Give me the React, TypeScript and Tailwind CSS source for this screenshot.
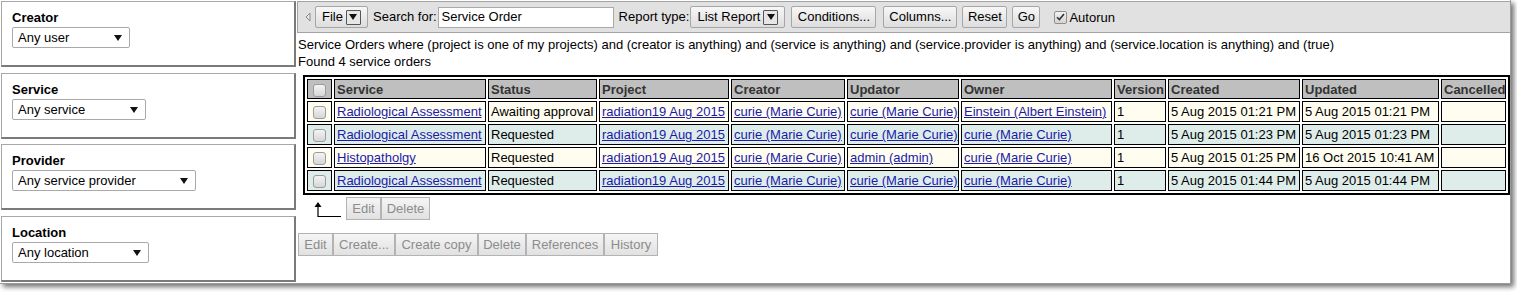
import React from "react";

const FONT = "font-['Liberation_Sans',Arial,sans-serif]";

function Arrow({ className = "" }: { className?: string }) {
  return (
    <svg className={className} width="8" height="6" viewBox="0 0 8 6">
      <polygon points="0,0 8,0 4,6" fill="#111" />
    </svg>
  );
}

function FilterPanel({
  label,
  value,
  width,
  className = "",
}: {
  label: string;
  value: string;
  width: string;
  className?: string;
}) {
  return (
    <div
      className={`h-[66px] bg-white border border-[#a8a8a8] border-r-2 border-b-2 border-r-[#7a7a7a] border-b-[#7a7a7a] pl-[10px] pt-[7px] ${className}`}
    >
      <div className="font-bold leading-[17px]">{label}</div>
      <div
        className={`${width} h-[21px] mt-[1px] flex items-center justify-between pl-[5px] pr-[7px] border border-[#a9a9a9] rounded-[2px] bg-white leading-[15px]`}
      >
        <span>{value}</span>
        <Arrow />
      </div>
    </div>
  );
}

function ToolButton({
  children,
  width,
  className = "",
}: {
  children: React.ReactNode;
  width: string;
  className?: string;
}) {
  return (
    <div
      className={`${width} h-[22px] flex items-center justify-center gap-[3px] border border-[#a6a6a6] rounded-[2px] bg-linear-to-b from-[#f7f7f7] to-[#dddddd] text-black ${className}`}
    >
      {children}
    </div>
  );
}

function DropBox() {
  return (
    <span className="w-[15px] h-[15px] flex items-center justify-center border border-[#555] bg-[#e6e6e6] rounded-[1px]">
      <Arrow />
    </span>
  );
}

function DisabledButton({ label, width }: { label: string; width: string }) {
  return (
    <div
      className={`${width} h-[23px] flex items-center justify-center border border-[#b3b3b3] bg-linear-to-b from-[#f5f5f5] to-[#e1e1e1] text-[#8c8c8c]`}
    >
      {label}
    </div>
  );
}

function Check() {
  return (
    <span className="inline-block w-[13px] h-[13px] border border-[#9c9c9c] rounded-[3px] bg-linear-to-b from-[#f4f4f4] to-[#d6d6d6] align-middle" />
  );
}

const columns = [
  { name: "Service", w: "w-[152px]" },
  { name: "Status", w: "w-[109px]" },
  { name: "Project", w: "w-[130px]" },
  { name: "Creator", w: "w-[114px]" },
  { name: "Updator", w: "w-[112px]" },
  { name: "Owner", w: "w-[151px]" },
  { name: "Version", w: "w-[52px]" },
  { name: "Created", w: "w-[132px]" },
  { name: "Updated", w: "w-[137px]" },
  { name: "Cancelled", w: "w-[65px]" },
];

type Row = {
  service: string;
  status: string;
  updator: string;
  owner: string;
  created: string;
  updated: string;
};

const rows: Row[] = [
  {
    service: "Radiological Assessment",
    status: "Awaiting approval",
    updator: "curie (Marie Curie)",
    owner: "Einstein (Albert Einstein)",
    created: "5 Aug 2015 01:21 PM",
    updated: "5 Aug 2015 01:21 PM",
  },
  {
    service: "Radiological Assessment",
    status: "Requested",
    updator: "curie (Marie Curie)",
    owner: "curie (Marie Curie)",
    created: "5 Aug 2015 01:23 PM",
    updated: "5 Aug 2015 01:23 PM",
  },
  {
    service: "Histopatholgy",
    status: "Requested",
    updator: "admin (admin)",
    owner: "curie (Marie Curie)",
    created: "5 Aug 2015 01:25 PM",
    updated: "16 Oct 2015 10:41 AM",
  },
  {
    service: "Radiological Assessment",
    status: "Requested",
    updator: "curie (Marie Curie)",
    owner: "curie (Marie Curie)",
    created: "5 Aug 2015 01:44 PM",
    updated: "5 Aug 2015 01:44 PM",
  },
];

const td = "border border-black px-[2px] h-[21px] whitespace-nowrap overflow-hidden";
const link = "text-[#1a1aab] underline";

export default function App() {
  return (
    <div className={`w-[1517px] h-[292px] bg-white text-black text-[13px] ${FONT}`}>
      <div className="w-[1511px] h-[284px] flex bg-white border-r border-b border-[#9a9a9a] shadow-[3px_3px_5px_rgba(0,0,0,0.55)]">
        {/* filters */}
        <div className="w-[297px] flex flex-col pl-[1px] pr-[1px] pt-[1px]">
          <FilterPanel label="Creator" value="Any user" width="w-[118px]" />
          <FilterPanel label="Service" value="Any service" width="w-[134px]" className="mt-[6px]" />
          <FilterPanel label="Provider" value="Any service provider" width="w-[184px]" className="mt-[5px]" />
          <FilterPanel label="Location" value="Any location" width="w-[137px]" className="mt-[6px]" />
        </div>

        {/* main */}
        <div className="flex-1 flex flex-col pt-[1px]">
          <div className="h-[32px] flex items-center bg-[#e1e1e1] border-t border-l border-b border-[#a3a3a3] pl-[7px]">
            <svg width="6" height="10" viewBox="0 0 6 10">
              <polygon points="5,1 1,5 5,9" fill="#e8e8e8" stroke="#8a8a8a" strokeWidth="1" />
            </svg>
            <ToolButton width="w-[53px]" className="ml-[4px]">
              <span>File</span>
              <DropBox />
            </ToolButton>
            <span className="ml-[5px]">Search for:</span>
            <div className="ml-[1px] w-[176px] h-[21px] flex items-center px-[3px] bg-white border border-[#a9a9a9]">
              Service Order
            </div>
            <span className="ml-[5px]">Report type:</span>
            <ToolButton width="w-[95px]" className="ml-[1px]">
              <span>List Report</span>
              <DropBox />
            </ToolButton>
            <ToolButton width="w-[85px]" className="ml-[6px]">
              Conditions...
            </ToolButton>
            <ToolButton width="w-[74px]" className="ml-[7px]">
              Columns...
            </ToolButton>
            <ToolButton width="w-[45px]" className="ml-[5px]">
              Reset
            </ToolButton>
            <ToolButton width="w-[28px]" className="ml-[5px]">
              Go
            </ToolButton>
            <span className="ml-[14px] w-[13px] h-[13px] border border-[#8f8f8f] rounded-[2px] bg-linear-to-b from-[#f2f2f2] to-[#d4d4d4] flex items-center justify-center">
              <svg width="9" height="8" viewBox="0 0 9 8">
                <path d="M1 4.2 L3.4 6.6 L8 1" fill="none" stroke="#333" strokeWidth="1.6" />
              </svg>
            </span>
            <span className="ml-[2px] mt-[2px]">Autorun</span>
          </div>

          <div className="pl-[1px] mt-[3px] leading-[17px]">
            <div>
              Service Orders where (project is one of my projects) and (creator is anything) and (service is
              anything) and (service.provider is anything) and (service.location is anything) and (true)
            </div>
            <div>Found 4 service orders</div>
          </div>

          <table className="ml-[6px] mt-[5px] w-[1207px] table-fixed border-separate border-spacing-[2px] border-2 border-black leading-[15px]">
            <thead>
              <tr>
                <th className="w-[25px] border border-black bg-[#bfbfbf] h-[20px] text-center">
                  <Check />
                </th>
                {columns.map((c) => (
                  <th
                    key={c.name}
                    className={`${c.w} border border-black bg-[#bfbfbf] h-[20px] px-[2px] text-left font-bold text-[#333] whitespace-nowrap overflow-hidden`}
                  >
                    {c.name}
                  </th>
                ))}
              </tr>
            </thead>
            <tbody>
              {rows.map((r, i) => {
                const bg = i % 2 === 0 ? "bg-[#fffdef]" : "bg-[#deedea]";
                return (
                  <tr key={i}>
                    <td className={`${td} ${bg} text-center`}>
                      <Check />
                    </td>
                    <td className={`${td} ${bg}`}>
                      <span className={link}>{r.service}</span>
                    </td>
                    <td className={`${td} ${bg}`}>{r.status}</td>
                    <td className={`${td} ${bg}`}>
                      <span className={link}>radiation19 Aug 2015</span>
                    </td>
                    <td className={`${td} ${bg}`}>
                      <span className={link}>curie (Marie Curie)</span>
                    </td>
                    <td className={`${td} ${bg}`}>
                      <span className={link}>{r.updator}</span>
                    </td>
                    <td className={`${td} ${bg}`}>
                      <span className={link}>{r.owner}</span>
                    </td>
                    <td className={`${td} ${bg}`}>1</td>
                    <td className={`${td} ${bg}`}>{r.created}</td>
                    <td className={`${td} ${bg}`}>{r.updated}</td>
                    <td className={`${td} ${bg}`}></td>
                  </tr>
                );
              })}
            </tbody>
          </table>

          <div className="flex items-center mt-[2px] ml-[16px]">
            <svg width="30" height="18" viewBox="0 0 30 18">
              <polygon points="5,2 1.5,7 8.5,7" fill="#000" />
              <path d="M5 6 V16.5 H28" fill="none" stroke="#000" strokeWidth="1.2" />
            </svg>
            <div className="flex ml-[3px]">
              <DisabledButton label="Edit" width="w-[35px]" />
              <DisabledButton label="Delete" width="w-[49px]" />
            </div>
          </div>

          <div className="flex mt-[13px] ml-[1px]">
            <DisabledButton label="Edit" width="w-[35px]" />
            <DisabledButton label="Create..." width="w-[62px]" />
            <DisabledButton label="Create copy" width="w-[83px]" />
            <DisabledButton label="Delete" width="w-[48px]" />
            <DisabledButton label="References" width="w-[78px]" />
            <DisabledButton label="History" width="w-[54px]" />
          </div>
        </div>
      </div>
    </div>
  );
}
